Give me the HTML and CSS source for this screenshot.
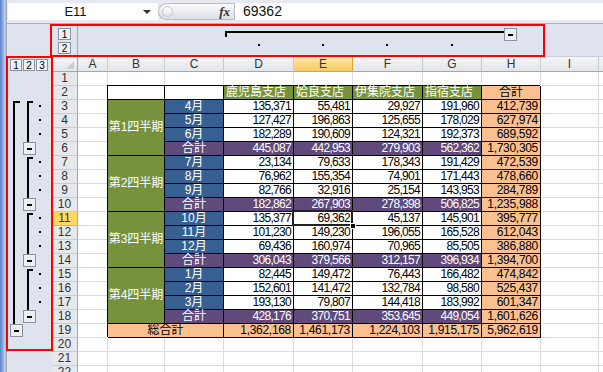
FILE: index.html
```html
<!DOCTYPE html>
<html lang="ja">
  <head>
    <meta charset="UTF-8" />
    <meta name="viewport" content="width=device-width, initial-scale=1.0" />
    <title>支店別売上 - アウトライン</title>
    <link rel="stylesheet" href="styles.css">
  </head>
  <body>
    <div class="excel">
      <div class="edge"></div>
      <div class="main">
        <div class="formula-bar">
          <div class="name-box"><span class="name">E11</span><span class="drop"></span></div>
          <div class="fx-box"><span class="grip"></span><span class="fx">fx</span></div>
          <div class="formula">69362</div>
        </div>

        <div class="col-outline">
          <div class="gutter-corner"></div>
          <div class="col-levels">
            <span class="lvl">1</span>
            <span class="lvl">2</span>
          </div>
          <svg class="outline-svg" width="525" height="32" viewBox="0 0 525 32">
            <rect x="147" y="7" width="280" height="2" />
            <rect x="147" y="7" width="2" height="6" />
            <rect x="180" y="20" width="2" height="2" />
            <rect x="244" y="20" width="2" height="2" />
            <rect x="308" y="20" width="2" height="2" />
            <rect x="373" y="20" width="2" height="2" />
            <rect class="btn" x="426.5" y="4.5" width="12" height="12" />
            <rect x="430" y="10" width="5" height="2" />
          </svg>
        </div>

        <div class="work">
          <div class="row-outline">
            <div class="row-levels">
              <span class="lvl">1</span>
              <span class="lvl">2</span>
              <span class="lvl">3</span>
            </div>
            <svg class="outline-svg" width="45" height="300" viewBox="0 0 45 300">
              <!-- level 1 -->
              <rect x="6" y="29" width="7" height="2" />
              <rect x="6" y="29" width="2" height="224" />
              <!-- level 2 groups -->
              <rect x="20" y="29" width="6" height="2" />
              <rect x="20" y="29" width="2" height="42" />
              <rect x="20" y="85" width="6" height="2" />
              <rect x="20" y="85" width="2" height="42" />
              <rect x="20" y="141" width="6" height="2" />
              <rect x="20" y="141" width="2" height="42" />
              <rect x="20" y="197" width="6" height="2" />
              <rect x="20" y="197" width="2" height="42" />
              <!-- detail rows -->
              <rect x="32" y="33" width="2" height="2" />
              <rect x="32" y="47" width="2" height="2" />
              <rect x="32" y="61" width="2" height="2" />
              <rect x="32" y="89" width="2" height="2" />
              <rect x="32" y="103" width="2" height="2" />
              <rect x="32" y="117" width="2" height="2" />
              <rect x="32" y="145" width="2" height="2" />
              <rect x="32" y="159" width="2" height="2" />
              <rect x="32" y="173" width="2" height="2" />
              <rect x="32" y="201" width="2" height="2" />
              <rect x="32" y="215" width="2" height="2" />
              <rect x="32" y="229" width="2" height="2" />
              <!-- collapse buttons -->
              <rect class="btn" x="16.5" y="70.5" width="12" height="12" />
              <rect x="20" y="76" width="5" height="2" />
              <rect class="btn" x="16.5" y="126.5" width="12" height="12" />
              <rect x="20" y="132" width="5" height="2" />
              <rect class="btn" x="16.5" y="182.5" width="12" height="12" />
              <rect x="20" y="188" width="5" height="2" />
              <rect class="btn" x="16.5" y="238.5" width="12" height="12" />
              <rect x="20" y="244" width="5" height="2" />
              <rect class="btn" x="3.5" y="252.5" width="12" height="12" />
              <rect x="7" y="258" width="5" height="2" />
            </svg>
          </div>

          <div class="sheet">
            <div class="corner"></div><div class="ch">A</div><div class="ch">B</div><div class="ch">C</div><div class="ch">D</div><div class="ch on">E</div><div class="ch">F</div><div class="ch">G</div><div class="ch">H</div><div class="ch">I</div><div class="ch"></div>

            <div class="rh">1</div><div></div><div></div><div></div><div></div><div></div><div></div><div></div><div></div><div></div><div></div>
            <div class="rh">2</div><div></div><div class="t"></div><div class="t"></div><div class="t branch">鹿児島支店</div><div class="t branch">姶良支店</div><div class="t branch">伊集院支店</div><div class="t branch">指宿支店</div><div class="t total mid">合計</div><div></div><div></div>

            <div class="rh">3</div><div></div><div class="t quarter">第1四半期</div><div class="t month">4月</div><div class="t num">135,371</div><div class="t num">55,481</div><div class="t num">29,927</div><div class="t num">191,960</div><div class="t num total">412,739</div><div></div><div></div>
            <div class="rh">4</div><div></div><div class="t month">5月</div><div class="t num">127,427</div><div class="t num">196,863</div><div class="t num">125,655</div><div class="t num">178,029</div><div class="t num total">627,974</div><div></div><div></div>
            <div class="rh">5</div><div></div><div class="t month">6月</div><div class="t num">182,289</div><div class="t num">190,609</div><div class="t num">124,321</div><div class="t num">192,373</div><div class="t num total">689,592</div><div></div><div></div>
            <div class="rh">6</div><div></div><div class="t sub mid">合計</div><div class="t num sub">445,087</div><div class="t num sub">442,953</div><div class="t num sub">279,903</div><div class="t num sub">562,362</div><div class="t num total">1,730,305</div><div></div><div></div>

            <div class="rh">7</div><div></div><div class="t quarter">第2四半期</div><div class="t month">7月</div><div class="t num">23,134</div><div class="t num">79,633</div><div class="t num">178,343</div><div class="t num">191,429</div><div class="t num total">472,539</div><div></div><div></div>
            <div class="rh">8</div><div></div><div class="t month">8月</div><div class="t num">76,962</div><div class="t num">155,354</div><div class="t num">74,901</div><div class="t num">171,443</div><div class="t num total">478,660</div><div></div><div></div>
            <div class="rh">9</div><div></div><div class="t month">9月</div><div class="t num">82,766</div><div class="t num">32,916</div><div class="t num">25,154</div><div class="t num">143,953</div><div class="t num total">284,789</div><div></div><div></div>
            <div class="rh">10</div><div></div><div class="t sub mid">合計</div><div class="t num sub">182,862</div><div class="t num sub">267,903</div><div class="t num sub">278,398</div><div class="t num sub">506,825</div><div class="t num total">1,235,988</div><div></div><div></div>

            <div class="rh on">11</div><div></div><div class="t quarter">第3四半期</div><div class="t month">10月</div><div class="t num">135,377</div><div class="t num sel">69,362</div><div class="t num">45,137</div><div class="t num">145,901</div><div class="t num total">395,777</div><div></div><div></div>
            <div class="rh">12</div><div></div><div class="t month">11月</div><div class="t num">101,230</div><div class="t num">149,230</div><div class="t num">196,055</div><div class="t num">165,528</div><div class="t num total">612,043</div><div></div><div></div>
            <div class="rh">13</div><div></div><div class="t month">12月</div><div class="t num">69,436</div><div class="t num">160,974</div><div class="t num">70,965</div><div class="t num">85,505</div><div class="t num total">386,880</div><div></div><div></div>
            <div class="rh">14</div><div></div><div class="t sub mid">合計</div><div class="t num sub">306,043</div><div class="t num sub">379,566</div><div class="t num sub">312,157</div><div class="t num sub">396,934</div><div class="t num total">1,394,700</div><div></div><div></div>

            <div class="rh">15</div><div></div><div class="t quarter">第4四半期</div><div class="t month">1月</div><div class="t num">82,445</div><div class="t num">149,472</div><div class="t num">76,443</div><div class="t num">166,482</div><div class="t num total">474,842</div><div></div><div></div>
            <div class="rh">16</div><div></div><div class="t month">2月</div><div class="t num">152,601</div><div class="t num">141,472</div><div class="t num">132,784</div><div class="t num">98,580</div><div class="t num total">525,437</div><div></div><div></div>
            <div class="rh">17</div><div></div><div class="t month">3月</div><div class="t num">193,130</div><div class="t num">79,807</div><div class="t num">144,418</div><div class="t num">183,992</div><div class="t num total">601,347</div><div></div><div></div>
            <div class="rh">18</div><div></div><div class="t sub mid">合計</div><div class="t num sub">428,176</div><div class="t num sub">370,751</div><div class="t num sub">353,645</div><div class="t num sub">449,054</div><div class="t num total">1,601,626</div><div></div><div></div>

            <div class="rh">19</div><div></div><div class="t total grand">総合計</div><div class="t num total">1,362,168</div><div class="t num total">1,461,173</div><div class="t num total">1,224,103</div><div class="t num total">1,915,175</div><div class="t num total">5,962,619</div><div></div><div></div>
            <div class="rh">20</div><div></div><div></div><div></div><div></div><div></div><div></div><div></div><div></div><div></div><div></div>
            <div class="rh">21</div><div></div><div></div><div></div><div></div><div></div><div></div><div></div><div></div><div></div><div></div>
            <div class="rh">22</div><div></div><div></div><div></div><div></div><div></div><div></div><div></div><div></div><div></div><div></div>
          </div>
        </div>
      </div>

      <!-- annotation frames -->
      <div class="mark mark-cols"></div>
      <div class="mark mark-rows"></div>
    </div>
  </body>
</html>
```

FILE: styles.css
```css
body {
  margin: 0;
  background: #dfe3ee;
}
.excel {
  position: relative;
  display: flex;
  width: 603px;
  height: 372px;
  overflow: hidden;
  background: #dfe3ee;
  font-family: "Liberation Sans", "Noto Sans CJK JP", sans-serif;
}
.edge {
  width: 7px;
  flex-shrink: 0;
  background: linear-gradient(90deg, #5b7ec6 0, #7b9ede 2px, #a7c0ec 4px, #c8d0de 5px, #a4acb8 6px);
}
.main {
  flex: 1;
  display: flex;
  flex-direction: column;
  min-width: 0;
}

/* formula bar */
.formula-bar {
  display: flex;
  height: 24px;
  box-sizing: border-box;
  padding: 3px 0 3px 1px;
  background: #e6e9f0;
  border-bottom: 1px solid #abb2bd;
}
.name-box {
  width: 150px;
  display: flex;
  align-items: center;
  background: #fff;
}
.name {
  flex: 1;
  text-align: center;
  font-size: 13px;
  color: #111;
}
.drop {
  width: 0;
  height: 0;
  border-left: 4px solid transparent;
  border-right: 4px solid transparent;
  border-top: 4px solid #333;
  margin-right: 7px;
}
.fx-box {
  width: 76px;
  box-sizing: border-box;
  display: flex;
  align-items: center;
  justify-content: space-between;
  padding: 0 4px 0 3px;
  background: linear-gradient(#fbfbfc, #dcdfe5);
  border: 1px solid #b8bec7;
  border-right: none;
  border-radius: 9px 0 0 9px;
}
.grip {
  width: 9px;
  height: 9px;
  border-radius: 50%;
  border: 1px solid #c3c8cf;
  background: linear-gradient(#fff, #e1e4e9);
}
.fx {
  font: italic bold 13px "Liberation Serif", serif;
  color: #333;
}
.formula {
  flex: 1;
  background: #fff;
  border-left: 1px solid #b8bec7;
  padding-left: 8px;
  font-size: 14px;
  line-height: 17px;
  color: #111;
}

/* outline gutters */
.col-outline {
  display: flex;
  height: 33px;
  box-sizing: border-box;
  border-bottom: 1px solid #c9cdd5;
}
.gutter-corner {
  width: 45px;
  flex-shrink: 0;
}
.col-levels {
  width: 25px;
  flex-shrink: 0;
  border-right: 1px solid #a3aab4;
  display: flex;
  flex-direction: column;
  align-items: center;
  gap: 2px;
  padding-top: 4px;
}
.lvl {
  width: 13px;
  height: 12px;
  box-sizing: border-box;
  display: flex;
  align-items: center;
  justify-content: center;
  border: 1px solid #8c929b;
  background: #eef0f5;
  box-shadow: inset 1px 1px 0 #fff;
  font-size: 10px;
  color: #000;
}
.outline-svg {
  display: block;
  fill: #000;
}
.outline-svg .btn {
  fill: #eceef4;
  stroke: #8c929b;
}
.work {
  flex: 1;
  display: flex;
  min-height: 0;
}
.row-outline {
  width: 45px;
  flex-shrink: 0;
}
.row-levels {
  height: 15px;
  box-sizing: border-box;
  display: flex;
  gap: 1px;
  padding: 2px 0 0 3px;
}
.row-levels .lvl {
  width: 12px;
}

/* sheet grid */
.sheet {
  flex: 1;
  display: grid;
  grid-template-columns: 26px 30px 57px 59px 70px 59px 70px 59px 59px 58px 1fr;
  grid-template-rows: 15px;
  grid-auto-rows: 14px;
  align-content: start;
  background: #fff;
  font-size: 12px;
  line-height: 13px;
  color: #000;
}
.sheet > div {
  box-sizing: border-box;
  border-right: 1px solid #d9dbde;
  border-bottom: 1px solid #d9dbde;
  padding: 0 2px;
  white-space: nowrap;
  background: #fff;
}
.sheet > .ch {
  background: linear-gradient(#f4f5f7, #e2e5ea);
  border-right-color: #c5c9d0;
  border-bottom-color: #a1a8b2;
  text-align: center;
  font-size: 12px;
  line-height: 14px;
  color: #333;
}
.sheet > .rh {
  background: #e5e8ec;
  border-right-color: #a1a8b2;
  border-bottom-color: #c8ccd2;
  text-align: center;
  color: #333;
}
.sheet > .corner {
  position: relative;
  background: linear-gradient(#f4f5f7, #e2e5ea);
  border-right-color: #a1a8b2;
  border-bottom-color: #a1a8b2;
}
.corner::after {
  content: "";
  position: absolute;
  right: 3px;
  bottom: 2px;
  border-left: 8px solid transparent;
  border-bottom: 8px solid #c9cdd3;
}
.sheet > .ch.on {
  background: linear-gradient(#fde9ad, #f6c962);
  border-right-color: #e0a43c;
  border-bottom-color: #e0a43c;
}
.sheet > .rh.on {
  background: #ffd761;
  border-right-color: #e0a43c;
  border-bottom-color: #e8b24a;
}

/* black-bordered table block */
.sheet > .t {
  position: relative;
  z-index: 1;
  border-right-color: #000;
  border-bottom-color: #000;
  box-shadow: -1px -1px 0 #000;
}
.num {
  text-align: right;
  letter-spacing: -0.7px;
}
.mid {
  text-align: center;
}
.sheet > .branch {
  background: #76923c;
  color: #fff;
}
.sheet > .quarter {
  grid-row: span 4;
  display: flex;
  align-items: center;
  justify-content: center;
  background: #76923c;
  color: #fff;
}
.sheet > .month {
  background: #366092;
  color: #fff;
  text-align: center;
}
.sheet > .sub {
  background: #604a7b;
  color: #fff;
}
.sheet > .total {
  background: #fac090;
}
.sheet > .total.num {
  letter-spacing: -0.3px;
}
.sheet > .grand {
  grid-column: span 2;
  text-align: center;
}
.sheet > .sel {
  z-index: 3;
}
.sel::after {
  content: "";
  position: absolute;
  left: -2px;
  top: -2px;
  right: -1px;
  bottom: -1px;
  border: 2px solid #222;
}
.sel::before {
  content: "";
  position: absolute;
  right: -4px;
  bottom: -4px;
  width: 4px;
  height: 4px;
  background: #000;
  border: 1px solid #fff;
  z-index: 1;
}

/* red annotation frames */
.mark {
  position: absolute;
  box-sizing: border-box;
  border: 2px solid #f00;
  z-index: 5;
  pointer-events: none;
}
.mark-cols {
  left: 50px;
  top: 24px;
  width: 495px;
  height: 33px;
}
.mark-rows {
  left: 6px;
  top: 56px;
  width: 47px;
  height: 295px;
}
```
